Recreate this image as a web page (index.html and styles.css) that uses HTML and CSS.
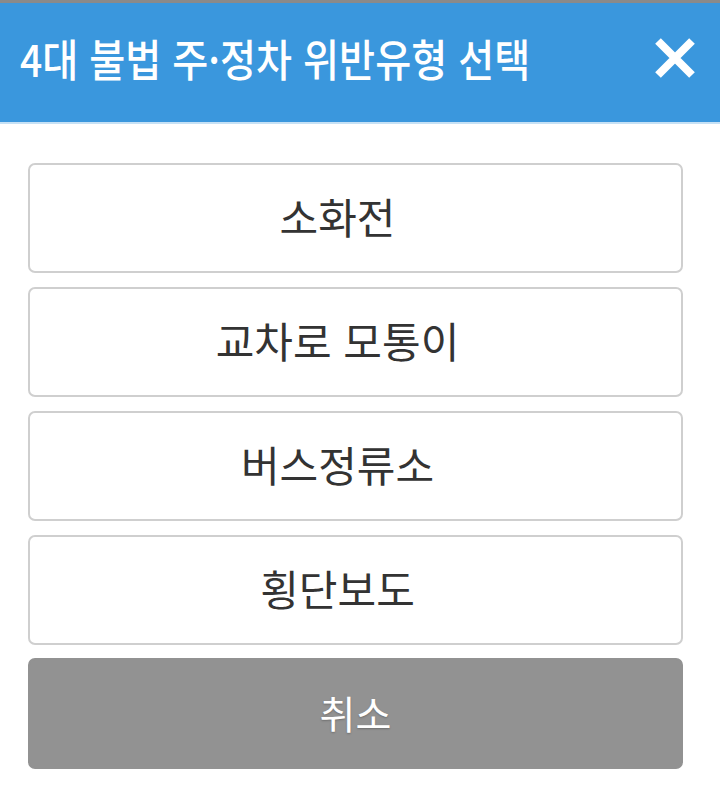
FILE: index.html
```html
<!DOCTYPE html>
<html lang="ko">
<head>
<meta charset="utf-8">
<link rel="stylesheet" href="styles.css">
</head>
<body>
<div class="backdrop"></div>
<div class="dialog">
  <header class="header">
    <h1 class="title">4대 불법 주·정차 위반유형 선택</h1>
    <button class="close" aria-label="닫기">
      <svg width="42" height="42" viewBox="0 0 42 42"><path d="M4 4 L38 38 M38 4 L4 38" stroke="#fff" stroke-width="8" stroke-linecap="butt" fill="none"/></svg>
    </button>
  </header>
  <div class="header-line"></div>
  <div class="options">
    <button class="opt">소화전</button>
    <button class="opt">교차로 모통이</button>
    <button class="opt">버스정류소</button>
    <button class="opt">횡단보도</button>
    <button class="opt cancel">취소</button>
  </div>
</div>
</body>
</html>
```
FILE: styles.css
```css
html, body {
  margin: 0;
  padding: 0;
  background: #fff;
  font-family: "Noto Sans CJK KR", "Noto Sans", sans-serif;
}
.backdrop {
  height: 3px;
  background: #8a8a8a;
}
.dialog {
  background: #fff;
}
.header {
  height: 119px;
  background: #3a97dd;
  display: flex;
  align-items: center;
  justify-content: space-between;
  padding: 0 24px 10px 20px;
  box-sizing: border-box;
}
.title {
  margin: 0;
  color: #fff;
  font-size: 44px;
  font-weight: 500;
  white-space: nowrap;
  transform: scaleX(0.89);
  transform-origin: left center;
  line-height: 1;
}
.close {
  background: none;
  border: 0;
  padding: 0;
  display: flex;
}
.header-line {
  height: 2px;
  background: #c6e1f5;
}
.options {
  padding: 39px 37px 0 28px;
  display: flex;
  flex-direction: column;
  gap: 14px;
}
.opt {
  height: 110px;
  border: 2px solid #cfcfcf;
  border-radius: 7px;
  background: #fff;
  color: #333;
  font-family: "Noto Sans CJK KR", "Noto Sans", sans-serif;
  font-size: 42px;
  font-weight: 400;
  padding: 0 36px 6px 0;
}
.cancel {
  height: 111px;
  margin-top: -1px;
  padding: 0 0 4px 0;
  background: #929292;
  border-color: #929292;
  color: #fff;
  font-size: 39px;
  text-shadow: 0 1px 2px rgba(0,0,0,0.25);
}
```
